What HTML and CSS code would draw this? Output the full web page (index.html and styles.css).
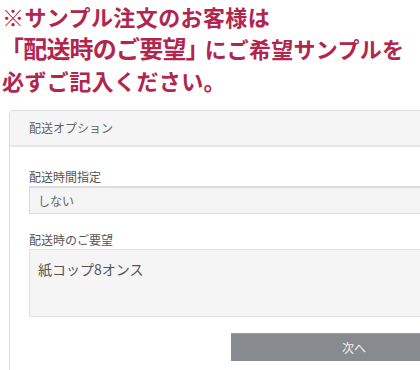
FILE: index.html
```html
<!DOCTYPE html>
<html lang="ja">
<head>
    <meta charset="UTF-8">
    <meta name="viewport" content="width=device-width, initial-scale=1.0">
    <title>配送オプション</title>
    <link rel="stylesheet" href="styles.css">
</head>
<body>
    <div class="notice">
        <p class="line">※サンプル注文のお客様は</p>
        <p class="line"><span class="big">「配送時のご要望」</span><span class="rest">にご希望サンプルを</span></p>
        <p class="line">必ずご記入ください。</p>
    </div>

    <div class="panel">
        <div class="panel-head">配送オプション</div>
        <div class="panel-body">
            <label class="field-label">配送時間指定</label>
            <div class="select-box">しない</div>

            <label class="field-label">配送時のご要望</label>
            <div class="text-box">紙コップ8オンス</div>

            <div class="actions">
                <button type="button" class="next-btn">次へ</button>
            </div>
        </div>
    </div>
</body>
</html>
```

FILE: styles.css
```css
html, body { margin: 0; overflow: hidden; }
body { font-family: "Noto Sans CJK JP", "Noto Sans", sans-serif; background: #fff; width: 420px; height: 370px; }

.notice { padding: 0 0 0 2px; color: #b2264e; font-weight: bold; }
.line { margin: 0; font-size: 22px; line-height: 32px; letter-spacing: 0.4px; white-space: nowrap; }
.big { font-size: 24px; line-height: 1; letter-spacing: -0.8px; margin-left: -2px; }
.rest { letter-spacing: 0.3px; margin-left: -4px; }

.panel { margin: 14px 0 0 9px; width: 486px; border: 1px solid #dcdcdc; border-radius: 4px 0 0 0; }
.panel-head { background: #f5f5f5; height: 34px; line-height: 34px; padding-left: 19px; font-size: 12px; color: #666; border-bottom: 2px solid #e6e6e6; border-radius: 4px 0 0 0; }
.panel-body { padding: 22px 19px 10px 19px; }

.field-label { display: block; font-size: 12px; color: #555; line-height: 16px; margin-bottom: 1px; }
.select-box { height: 25px; line-height: 25px; background: #f5f5f5; border: 1px solid #dcdcdc; border-top-width: 2px; padding-left: 8px; font-size: 12px; color: #666; margin-bottom: 18px; }
.text-box { height: 57px; background: #f5f5f5; border: 1px solid #e2e2e2; padding: 9px 8px 0 8px; font-size: 14px; color: #555; line-height: 20px; }

.actions { display: flex; justify-content: flex-end; margin-top: 16px; }
.next-btn { width: 246px; height: 28px; background: #878a8e; color: #f2f2f2; border: none; border-top: 1px solid #9a9da0; font-family: inherit; font-size: 12px; }
```
